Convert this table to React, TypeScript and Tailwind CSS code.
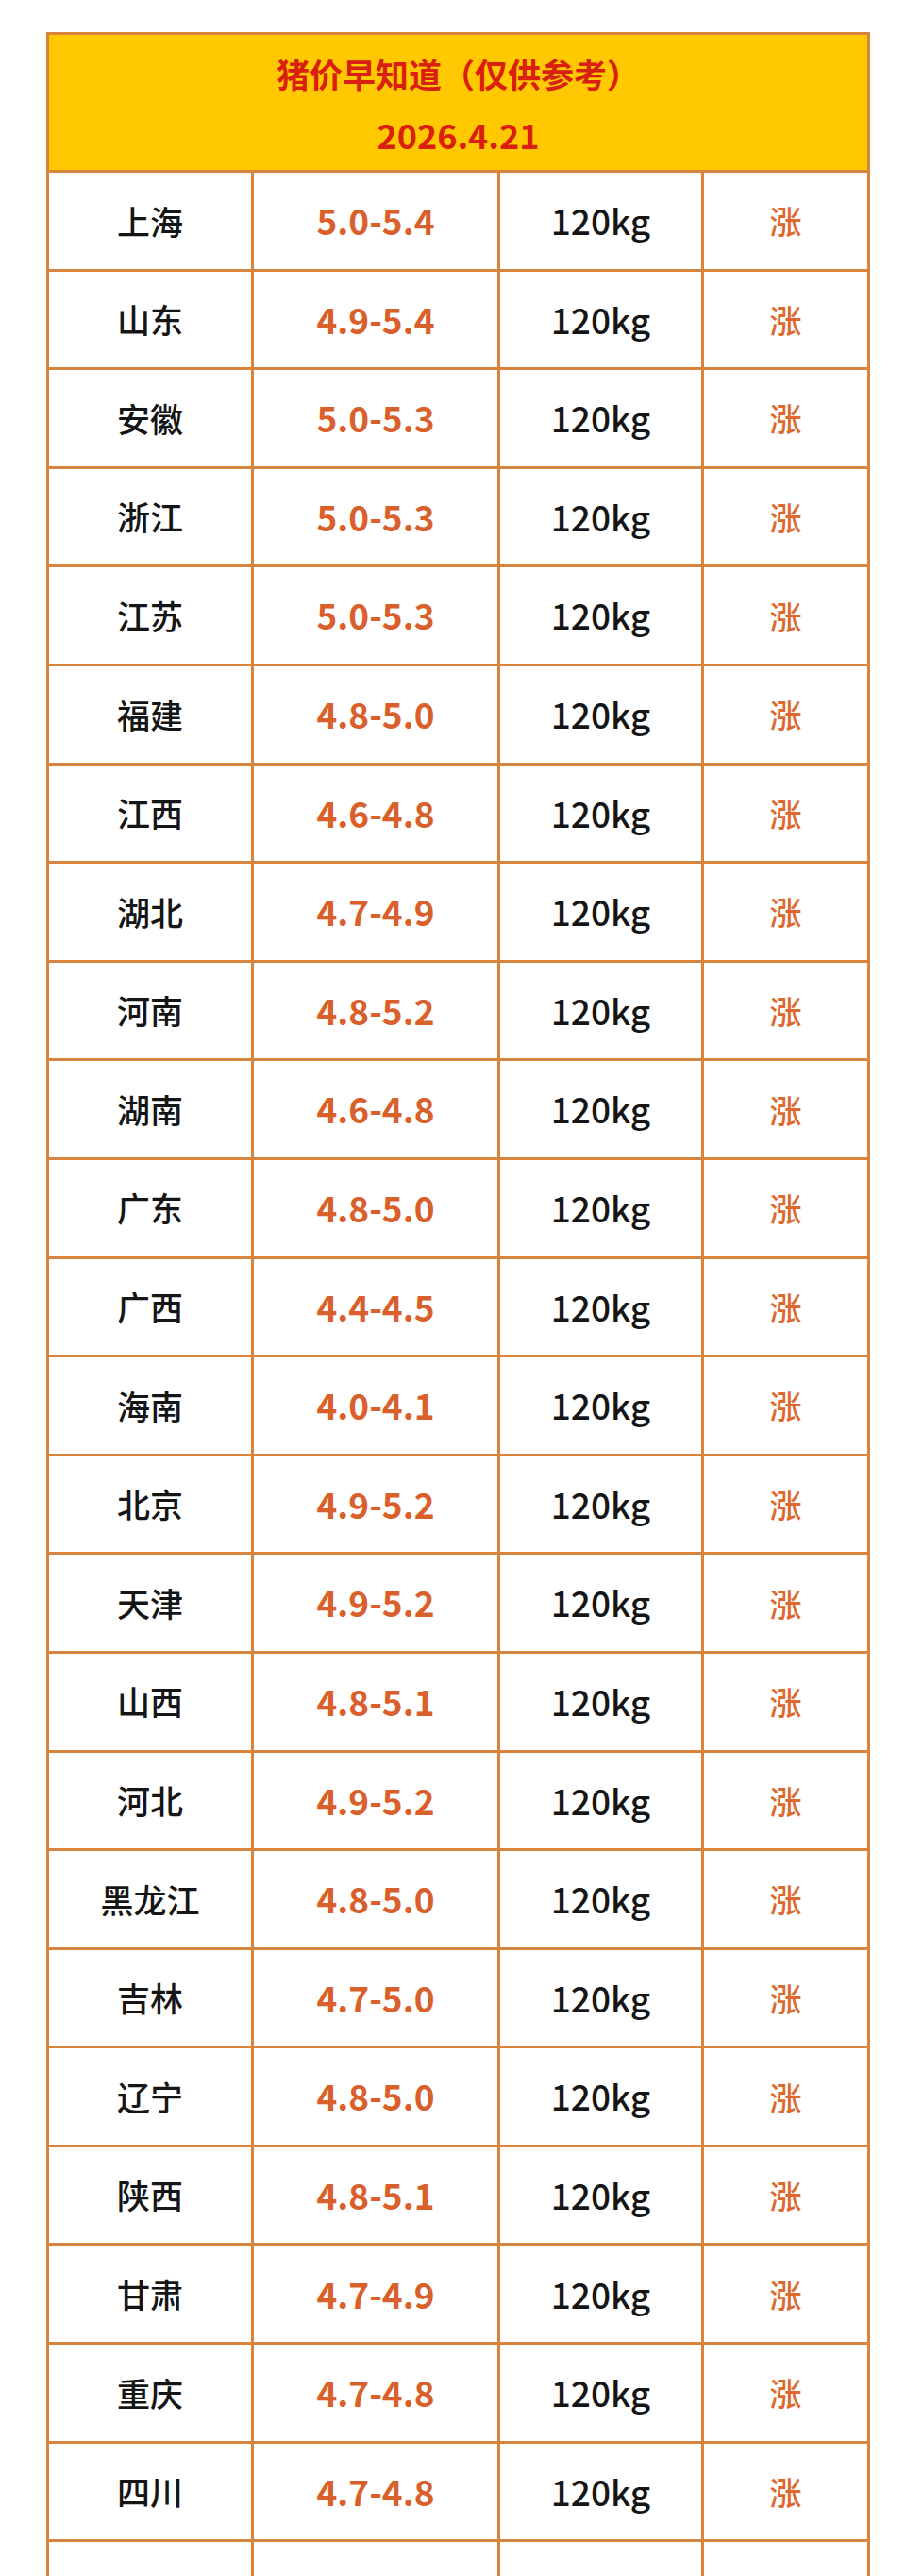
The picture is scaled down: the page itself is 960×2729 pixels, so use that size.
const rows: [string, string][] = [
  ['上海', '5.0-5.4'],
  ['山东', '4.9-5.4'],
  ['安徽', '5.0-5.3'],
  ['浙江', '5.0-5.3'],
  ['江苏', '5.0-5.3'],
  ['福建', '4.8-5.0'],
  ['江西', '4.6-4.8'],
  ['湖北', '4.7-4.9'],
  ['河南', '4.8-5.2'],
  ['湖南', '4.6-4.8'],
  ['广东', '4.8-5.0'],
  ['广西', '4.4-4.5'],
  ['海南', '4.0-4.1'],
  ['北京', '4.9-5.2'],
  ['天津', '4.9-5.2'],
  ['山西', '4.8-5.1'],
  ['河北', '4.9-5.2'],
  ['黑龙江', '4.8-5.0'],
  ['吉林', '4.7-5.0'],
  ['辽宁', '4.8-5.0'],
  ['陕西', '4.8-5.1'],
  ['甘肃', '4.7-4.9'],
  ['重庆', '4.7-4.8'],
  ['四川', '4.7-4.8'],
]

const PriceRow = ({ city, price, trend }: { city: string; price: string; trend: string }) => (
  <div className="grid h-[104.6px] grid-cols-[217px_261px_216px_173px] border-b-[3px] border-[#d9843c] bg-white">
    <div className="flex items-center justify-center border-r-[3px] border-[#d9843c] text-[35px] font-medium text-[#151515]">
      {city}
    </div>
    <div className="flex items-center justify-center border-r-[3px] border-[#d9843c] text-[37px] font-semibold text-[#d9602a]">
      {price}
    </div>
    <div className="flex items-center justify-center border-r-[3px] border-[#d9843c] text-[37px] font-medium text-[#151515]">
      {price && '120kg'}
    </div>
    <div className="flex items-center justify-center text-[34px] font-medium text-[#dc6a30]">
      {trend}
    </div>
  </div>
)

export default function App() {
  return (
    <div
      className="h-[2729px] overflow-hidden bg-white pt-[34px]"
      style={{ fontFamily: '"Noto Sans CJK SC", "Noto Sans", sans-serif' }}
    >
      <div className="ml-[49px] w-[873px] border-x-[3px] border-t-[3px] border-[#d9843c]">
        <div className="flex h-[146px] flex-col items-center justify-center border-b-[3px] border-[#d9843c] bg-[#ffc800] pt-[2px] font-bold text-[#d9200e]">
          <div className="text-[35px] leading-[64px]">猪价早知道（仅供参考）</div>
          <div className="text-[36px] leading-[64px]">2026.4.21</div>
        </div>

        {rows.map(([city, price], index) => (
          <PriceRow key={index} city={city} price={price} trend="涨" />
        ))}

        {/* next row is cut off by the bottom of the screenshot */}
        <PriceRow city="" price="" trend="" />
      </div>
    </div>
  )
}
